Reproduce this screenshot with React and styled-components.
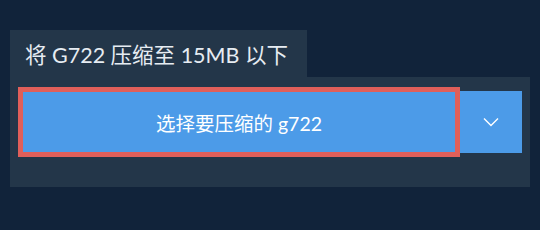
import React from "react";
import styled, { createGlobalStyle } from "styled-components";

const GlobalStyle = createGlobalStyle`
  html, body {
    margin: 0;
    padding: 0;
    background: #11233a;
  }
  body {
    font-family: Lato, "Noto Sans CJK SC", sans-serif;
  }
`;

const Page = styled.div`
  width: 540px;
  height: 230px;
  padding: 30px 10px 0;
  box-sizing: border-box;
`;

const Tab = styled.div`
  display: inline-flex;
  align-items: center;
  height: 47px;
  padding: 0 19px 0 15px;
  background: #233649;
  color: #e6ecf2;
  font-size: 21.5px;
  box-sizing: border-box;
`;

const Panel = styled.div`
  background: #233649;
  padding: 10px 8px 30px;
  display: flex;
  align-items: center;
`;

const MainButton = styled.button`
  width: 442px;
  height: 70px;
  border: 5px solid #e05f5a;
  background: #4c9be8;
  color: #ffffff;
  font-family: Lato, "Noto Sans CJK SC", sans-serif;
  font-size: 19.5px;
  padding: 0;
  box-sizing: border-box;
  cursor: pointer;
`;

const DropButton = styled.button`
  width: 62px;
  height: 62px;
  border: none;
  background: #4c9be8;
  display: flex;
  align-items: center;
  justify-content: center;
  padding: 0;
  cursor: pointer;
`;

const Chevron = () => (
  <svg width="16" height="10" viewBox="0 0 16 10">
    <path d="M1 1.5 L8 8.5 L15 1.5" fill="none" stroke="#ffffff" strokeWidth="1.4" />
  </svg>
);

export default function App() {
  return (
    <Page>
      <GlobalStyle />
      <Tab>将 G722 压缩至 15MB 以下</Tab>
      <Panel>
        <MainButton>选择要压缩的 g722</MainButton>
        <DropButton>
          <Chevron />
        </DropButton>
      </Panel>
    </Page>
  );
}
